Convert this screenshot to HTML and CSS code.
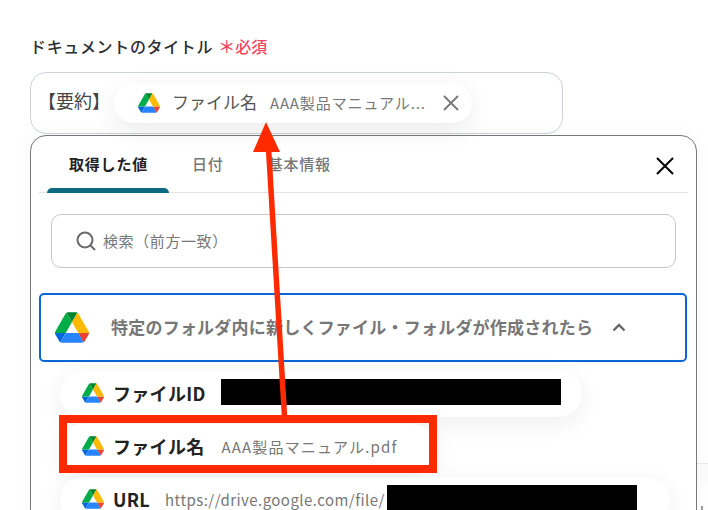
FILE: index.html
```html
<!DOCTYPE html>
<html lang="ja">
<head>
    <meta charset="UTF-8">
    <title>ドキュメントのタイトル</title>
    <link rel="stylesheet" href="styles.css">
</head>
<body>
    <svg width="0" height="0" class="defs">
        <symbol id="drive" viewBox="0 0 87.3 78">
            <path fill="#0066da" d="m6.6 66.85 3.85 6.65c.8 1.4 1.95 2.5 3.3 3.3L27.5 53H0c0 1.55.4 3.1 1.2 4.5z"/>
            <path fill="#00ac47" d="M43.65 25 29.9 1.2c-1.35.8-2.5 1.9-3.3 3.3L1.2 48.5A9.06 9.06 0 0 0 0 53h27.5z"/>
            <path fill="#ea4335" d="M73.55 76.8c1.35-.8 2.5-1.9 3.3-3.3l1.6-2.75L86.1 57.5c.8-1.4 1.2-2.95 1.2-4.5H59.8l5.85 11.5z"/>
            <path fill="#00832d" d="M43.65 25 57.4 1.2C56.05.4 54.5 0 52.9 0H34.4c-1.6 0-3.15.45-4.5 1.2z"/>
            <path fill="#2684fc" d="M59.8 53H27.5L13.75 76.8c1.35.8 2.9 1.2 4.5 1.2h50.8c1.6 0 3.15-.45 4.5-1.2z"/>
            <path fill="#ffba00" d="M73.4 26.5 60.7 4.5c-.8-1.4-1.95-2.5-3.3-3.3L43.65 25 59.8 53h27.45c0-1.55-.4-3.1-1.2-4.5z"/>
        </symbol>
    </svg>

    <div class="field-label">ドキュメントのタイトル<span class="required"><span class="star">＊</span>必須</span></div>

    <div class="title-input">
        <span class="prefix">【要約】</span>
        <div class="chip">
            <svg class="drive-sm"><use href="#drive"/></svg>
            <span class="chip-name">ファイル名</span>
            <span class="chip-value">AAA製品マニュアル...</span>
            <svg class="chip-close" viewBox="0 0 16 16"><path d="M1 1 15 15M15 1 1 15"/></svg>
        </div>
    </div>

    <div class="panel">
        <div class="tabs">
            <div class="tab active">取得した値</div>
            <div class="tab">日付</div>
            <div class="tab">基本情報</div>
            <svg class="panel-close" viewBox="0 0 18 18"><path d="M1 1 17 17M17 1 1 17"/></svg>
        </div>

        <div class="search">
            <svg class="search-icon" viewBox="0 0 20 20"><circle cx="9" cy="9" r="7.500"/><path d="m14.500 14.500 4.500 4.500"/></svg>
            <span class="search-text">検索（前方一致）</span>
        </div>

        <div class="trigger">
            <svg class="drive-lg"><use href="#drive"/></svg>
            <span class="trigger-text">特定のフォルダ内に新しくファイル・フォルダが作成されたら</span>
            <svg class="chevron" viewBox="0 0 14 9"><path d="M1.500 7.500 7 2l5.500 5.500"/></svg>
        </div>

        <div class="rows">
            <div class="row row-id">
                <svg class="drive-sm"><use href="#drive"/></svg>
                <span class="row-name">ファイルID</span>
                <span class="redact redact-id"></span>
            </div>
            <div class="row row-file">
                <svg class="drive-sm"><use href="#drive"/></svg>
                <span class="row-name">ファイル名</span>
                <span class="row-value">AAA製品マニュアル.pdf</span>
            </div>
            <div class="row row-url">
                <svg class="drive-sm"><use href="#drive"/></svg>
                <span class="row-name">URL</span>
                <span class="row-value">https://drive.google.com/file/</span>
                <span class="redact redact-url"></span>
            </div>
        </div>
    </div>

    <!-- bit of the page behind the panel -->
    <div class="behind"></div>
    <div class="behind-tick"></div>

    <!-- annotation drawn on top of the screenshot -->
    <div class="callout"></div>
    <svg class="arrow" width="708" height="510" viewBox="0 0 708 510">
        <path d="M284.500 416 268.500 148" stroke="#ff2a00" stroke-width="5.500" fill="none"/>
        <path d="M266 122 253 152H280Z" fill="#ff2a00"/>
    </svg>
</body>
</html>
```

FILE: styles.css
```css
* {
    box-sizing: border-box;
}

body {
    margin: 0;
    width: 708px;
    height: 510px;
    padding: 34px 0 0 30px;
    overflow: hidden;
    position: relative;
    background: #fff;
    font-family: "Noto Sans CJK JP", "Noto Sans", sans-serif;
    color: #222;
}

.defs {
    position: absolute;
}

.field-label {
    height: 23px;
    font-size: 16px;
    line-height: 23px;
    font-weight: 500;
    letter-spacing: 0.65px;
    color: #2b2f33;
}

.required {
    margin-left: 5px;
    font-size: 16px;
    letter-spacing: 0;
    color: #f5475f;
}

.star {
    font-size: 17px;
}

.title-input {
    margin-top: 15px;
    width: 533px;
    height: 62px;
    display: flex;
    align-items: center;
    border: 1px solid #cdd3dd;
    border-radius: 16px;
}

.prefix {
    font-size: 18px;
    color: #444;
    margin: -6px 0 0 7px;
    width: 80px;
    flex-shrink: 0;
    white-space: nowrap;
}

.chip {
    width: 358px;
    height: 40px;
    margin-left: -4px;
    padding-left: 24px;
    display: flex;
    align-items: center;
    border-radius: 20px;
    background: #fff;
    box-shadow: 0 6px 24px rgba(0, 0, 0, 0.08);
}

.drive-sm {
    width: 22px;
    height: 20px;
    flex-shrink: 0;
}

.chip-name {
    margin: -3px 0 0 12px;
    font-size: 17px;
    color: #555;
}

.chip-value {
    margin: -2px 0 0 13px;
    font-size: 15px;
    letter-spacing: 0.9px;
    color: #777;
}

.chip-close {
    margin-left: 17px;
    width: 16px;
    height: 16px;
    fill: none;
    stroke: #777;
    stroke-width: 1.8;
}

.panel {
    margin-top: 1px;
    width: 667px;
    height: 400px;
    padding: 0 8px;
    border: 1px solid #777;
    border-radius: 16px;
    background: #fff;
    box-shadow: 0 0 20px rgba(0, 0, 0, 0.04);
}

.tabs {
    height: 57px;
    padding-left: 30px;
    display: flex;
    align-items: center;
    gap: 44px;
    border-bottom: 1px solid #e2e4e8;
    position: relative;
    font-size: 15px;
}

.tab {
    color: #777;
    font-weight: 500;
    letter-spacing: 0.8px;
    margin-top: -1px;
}

.tab.active {
    color: #222;
    font-weight: 700;
}

.tab.active::after {
    content: "";
    position: absolute;
    left: 8px;
    bottom: -1px;
    width: 122px;
    height: 5px;
    background: #0e6a82;
    border-radius: 5px 5px 0 0;
}

.panel-close {
    position: absolute;
    right: 14px;
    top: 21px;
    width: 18px;
    height: 18px;
    fill: none;
    stroke: #000;
    stroke-width: 2;
}

.search {
    margin: 21px 12px 0 12px;
    height: 54px;
    padding-left: 24px;
    display: flex;
    align-items: center;
    gap: 7px;
    border: 1px solid #c8c8c8;
    border-radius: 10px;
    font-size: 15px;
    letter-spacing: 0.6px;
    color: #777;
}

.search-text {
    margin-top: -1px;
}

.search-icon {
    width: 20px;
    height: 20px;
    fill: none;
    stroke: #6a6a6a;
    stroke-width: 2;
}

.trigger {
    margin-top: 25px;
    width: 648px;
    height: 69px;
    padding-left: 14px;
    display: flex;
    align-items: center;
    border: 2px solid #0a66d4;
    border-radius: 5px;
}

.drive-lg {
    width: 34px;
    height: 31px;
}

.trigger-text {
    margin: -2px 0 0 22px;
    font-size: 17px;
    font-weight: 700;
    letter-spacing: 0.22px;
    color: #777;
    white-space: nowrap;
}

.chevron {
    margin-left: 19px;
    width: 14px;
    height: 9px;
    fill: none;
    stroke: #666;
    stroke-width: 2.4;
}

.rows {
    margin: 9px 0 0 21px;
    display: flex;
    flex-direction: column;
    gap: 7px;
}

.row {
    height: 46px;
    padding: 0 0 2px 22px;
    display: flex;
    align-items: center;
    flex-shrink: 0;
    border-radius: 23px;
    background: #fff;
    box-shadow: 0 6px 24px rgba(0, 0, 0, 0.07);
}

.row-id {
    width: 522px;
}

.row-file {
    width: 375px;
}

.row-url {
    width: 610px;
}

.row-name {
    margin-left: 9px;
    font-size: 18px;
    line-height: 1;
    font-weight: 700;
    letter-spacing: 0.3px;
    color: #222;
}

.row-value {
    margin-left: 17px;
    font-size: 15px;
    line-height: 1;
    letter-spacing: 1.2px;
    color: #777;
    white-space: nowrap;
}

.row-url .row-value {
    margin-left: 15px;
    letter-spacing: 0.45px;
}

.redact {
    background: #000;
    height: 26px;
    margin-top: -2px;
}

.redact-id {
    margin-left: 15px;
    width: 340px;
}

.redact-url {
    margin-left: 2px;
    width: 250px;
}

.behind {
    position: absolute;
    left: 697px;
    top: 463px;
    width: 11px;
    height: 22px;
    background: #fafafa;
    border-top: 1px solid #e8e8e8;
}

.behind-tick {
    position: absolute;
    left: 701px;
    top: 506px;
    width: 2px;
    height: 4px;
    background: #999;
}

.callout {
    position: absolute;
    left: 59px;
    top: 415px;
    width: 378px;
    height: 58px;
    border: 8px solid #ff2a00;
}

.arrow {
    position: absolute;
    left: 0;
    top: 0;
}
```
